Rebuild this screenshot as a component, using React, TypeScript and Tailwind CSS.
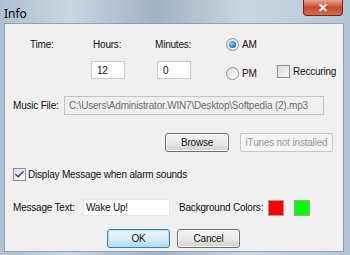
import { Check } from "lucide-react";

const font = { fontFamily: '"Liberation Sans", Tahoma, sans-serif' };

function Radio({ on, label }: { on?: boolean; label: string }) {
  return (
    <div className="flex items-center gap-[3px] shrink-0">
      <span className="w-[13px] h-[13px] shrink-0 rounded-full border border-[#8e8f8f] bg-gradient-to-br from-[#dcdcdc] to-[#ffffff] flex items-center justify-center">
        {on && (
          <span className="w-[7px] h-[7px] rounded-full bg-[radial-gradient(circle_at_35%_35%,#8fd4ff,#1b6ec2_70%,#0d4f91)]" />
        )}
      </span>
      <span>{label}</span>
    </div>
  );
}

function Box({ checked }: { checked?: boolean }) {
  return (
    <span className="w-[13px] h-[13px] shrink-0 border border-[#8e8f8f] bg-gradient-to-br from-[#dedede] to-[#f8f8f8] flex items-center justify-center">
      {checked && <Check className="w-[11px] h-[11px] text-[#2a3f8a]" strokeWidth={3} />}
    </span>
  );
}

function Button({ label, primary, disabled, w }: { label: string; primary?: boolean; disabled?: boolean; w: string }) {
  if (disabled)
    return (
      <div className={`${w} shrink-0 h-[19px] border border-[#c8c8c8] rounded-[2px] bg-[#f4f4f4] text-[#9a9a9a] flex items-center justify-center`}>
        {label}
      </div>
    );
  return (
    <div
      className={`${w} shrink-0 h-[19px] rounded-[3px] border flex items-center justify-center ${
        primary
          ? "border-[#3c7fb1] bg-gradient-to-b from-[#eaf6fd] via-[#d9f0fc] to-[#a7d9f5] shadow-[inset_0_0_0_1px_#b4e0f8]"
          : "border-[#707070] bg-gradient-to-b from-[#f2f2f2] via-[#ebebeb] to-[#cfcfcf] shadow-[inset_0_0_0_1px_#fcfcfc]"
      }`}
    >
      {label}
    </div>
  );
}

export default function App() {
  return (
    <div className="w-[350px] h-[255px] overflow-hidden bg-[linear-gradient(90deg,#aebfd0,#c6d6e4_20%,#9fb2c4_45%,#c9d7e3_70%,#b4c6d6)] flex flex-col" style={font}>
      {/* title bar */}
      <div className="h-[23px] flex items-start justify-between pl-[4px]">
        <span className="text-[12px] text-black mt-[5px]" style={{ fontFamily: '"Noto Sans", "Liberation Sans", sans-serif' }}>
          Info
        </span>
        <div className="mr-[7px] w-[40px] h-[16px] rounded-b-[4px] border border-t-0 border-[#6b2a20] bg-gradient-to-b from-[#e8a493] via-[#c9482d] to-[#d56a4b] flex items-center justify-center text-white text-[12px] font-bold">
          ✕
        </div>
      </div>

      {/* client area */}
      <div className="mx-[4px] w-[340px] h-[229px] bg-[#f0f0f0] border border-[#8ea1b4] text-[10px] tracking-[-0.2px] whitespace-nowrap text-[#111]">
        <div className="flex items-center h-[13px] mt-[14px]">
          <span className="ml-[25px] w-[63px] shrink-0">Time:</span>
          <span className="w-[62px] shrink-0">Hours:</span>
          <span className="w-[71px] shrink-0">Minutes:</span>
          <Radio on label="AM" />
        </div>

        <div className="flex items-center mt-[10px] h-[18px]">
          <div className="ml-[86px] w-[34px] shrink-0 h-[18px] bg-white border border-[#c8c8c8] pl-[5px] flex items-center">12</div>
          <div className="ml-[32px] w-[34px] shrink-0 h-[18px] bg-white border border-[#c8c8c8] pl-[5px] flex items-center">0</div>
          <div className="ml-[35px] w-[51px] shrink-0 mt-[6px]">
            <Radio label="PM" />
          </div>
          <div className="mt-[2px] flex items-center gap-[3px] shrink-0">
            <Box />
            <span>Reccuring</span>
          </div>
        </div>

        <div className="flex items-center mt-[17px] h-[19px]">
          <span className="ml-[8px] w-[51px] shrink-0">Music File:</span>
          <div className="w-[260px] shrink-0 h-[19px] border border-[#c3c3c3] bg-[#f0f0f0] text-[#6d6d6d] pl-[4px] flex items-center">
            C:\Users\Administrator.WIN7\Desktop\Softpedia (2).mp3
          </div>
        </div>

        <div className="flex mt-[18px] h-[19px]">
          <div className="ml-[160px]">
            <Button label="Browse" w="w-[64px]" />
          </div>
          <div className="ml-[11px]">
            <Button label="iTunes not installed" disabled w="w-[93px]" />
          </div>
        </div>

        <div className="flex items-center gap-[2px] mt-[15px] ml-[8px]">
          <Box checked />
          <span>Display Message when alarm sounds</span>
        </div>

        <div className="flex items-center mt-[17px] h-[17px]">
          <span className="ml-[8px] w-[70px] shrink-0">Message Text:</span>
          <div className="w-[87px] shrink-0 h-[17px] bg-white border border-[#e6e6e6] pl-[2px] flex items-center">Wake Up!</div>
          <span className="ml-[9px] w-[89px] shrink-0">Background Colors:</span>
          <div className="w-[16px] h-[16px] shrink-0 bg-[#ff0000] border border-[#a0a0a0]" />
          <div className="ml-[10px] w-[16px] h-[16px] shrink-0 bg-[#00ff00] border border-[#a0a0a0]" />
        </div>

        <div className="flex mt-[13px] gap-[7px] ml-[102px]">
          <Button label="OK" primary w="w-[63px]" />
          <Button label="Cancel" w="w-[63px]" />
        </div>
      </div>
    </div>
  );
}
